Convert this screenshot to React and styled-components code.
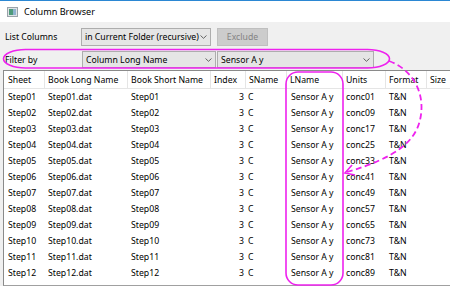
import React from "react";
import styled, { createGlobalStyle } from "styled-components";

const Global = createGlobalStyle`
  html, body { margin: 0; padding: 0; background: #f0f0f0; }
  body { font-family: "Noto Sans", "DejaVu Sans", sans-serif; }
  * { box-sizing: border-box; }
`;

const Window = styled.div`
  position: relative;
  width: 450px;
  height: 286px;
  overflow: hidden;
  background: #f0f0f0;
  display: flex;
  flex-direction: column;
  font-size: 8.7px;
  color: #000;
`;

const TitleBar = styled.div`
  height: 22px;
  flex: none;
  background: #fff;
  border-top: 1px solid #2b87d3;
  display: flex;
  align-items: center;
  padding-left: 7px;
  gap: 6px;
  font-size: 9.1px;
`;

const Body = styled.div`
  flex: 1;
  display: flex;
  flex-direction: column;
  padding-top: 6px;
  min-height: 0;
`;

const FormRow = styled.div`
  display: flex;
  align-items: center;
  height: ${(p) => p.$h}px;
  margin-bottom: ${(p) => p.$mb}px;
`;

const Label = styled.div`
  width: ${(p) => p.$w}px;
  padding-left: 5px;
  flex: none;
`;

const Combo = styled.div`
  width: ${(p) => p.$w}px;
  height: 100%;
  margin-right: ${(p) => p.$mr || 0}px;
  background: #e5e5e5;
  border: 1px solid #adadad;
  display: flex;
  align-items: center;
  justify-content: space-between;
  padding: 0 3px 0 3px;
  flex: none;
  white-space: nowrap;
  overflow: hidden;
`;

const Chevron = () => (
  <svg width="7" height="4" viewBox="0 0 7 4" style={{ flex: "none" }}>
    <path d="M0.5 0.5 L3.5 3.3 L6.5 0.5" fill="none" stroke="#555" strokeWidth="0.9" />
  </svg>
);

const Button = styled.div`
  width: 51px;
  height: 100%;
  background: #cccccc;
  border: 1px solid #bfbfbf;
  color: #838383;
  display: flex;
  align-items: center;
  justify-content: center;
`;

const Table = styled.div`
  flex: 1;
  margin-left: 3px;
  margin-top: 2px;
  background: #fff;
  border-left: 1px solid #8a8a8a;
  border-top: 1px solid #8a8a8a;
  border-bottom: 1px solid #a0a0a0;
  min-height: 0;
`;

const COLS = "41px 83px 83px 35px 41px 56px 43px 41px 60px";

const HeaderRow = styled.div`
  display: grid;
  grid-template-columns: ${COLS};
  height: 18px;
`;

const HeadCell = styled.div`
  border-right: 1px solid #e5e5e5;
  border-bottom: 1px solid #e5e5e5;
  padding-left: ${(p) => p.$pl ?? 3}px;
  display: flex;
  align-items: center;
  white-space: nowrap;
  overflow: hidden;
`;

const DataRow = styled.div`
  display: grid;
  grid-template-columns: ${COLS};
  height: 16px;
`;

const Cell = styled.div`
  display: flex;
  align-items: center;
  justify-content: ${(p) => (p.$right ? "flex-end" : "flex-start")};
  padding-left: ${(p) => (p.$right ? 0 : p.$pl ?? 3)}px;
  padding-right: ${(p) => (p.$right ? 2 : 0)}px;
  white-space: nowrap;
  overflow: hidden;
`;

const Overlay = styled.svg`
  position: absolute;
  left: 0;
  top: 0;
  pointer-events: none;
`;

const AppIcon = () => (
  <svg width="11" height="10" viewBox="0 0 11 10">
    <rect x="0.5" y="0.5" width="10" height="9" fill="#dfe3e6" stroke="#9aa3aa" />
    <rect x="2" y="2" width="4" height="6" fill="#4e9a7a" />
    <rect x="6" y="2" width="3" height="6" fill="#8fb3cf" />
  </svg>
);

const headers = ["Sheet", "Book Long Name", "Book Short Name", "Index", "SName", "LName", "Units", "Format", "Size"];
const units = ["01", "09", "17", "25", "33", "41", "49", "57", "65", "73", "81", "89"];

export default function App() {
  return (
    <>
      <Global />
      <Window>
        <TitleBar>
          <AppIcon />
          <span>Column Browser</span>
        </TitleBar>
        <Body>
          <FormRow $h={18} $mb={5}>
            <Label $w={81}>List Columns</Label>
            <Combo $w={130} $mr={6}>
              <span>in Current Folder (recursive)</span>
              <Chevron />
            </Combo>
            <Button>Exclude</Button>
          </FormRow>
          <FormRow $h={17} $mb={0}>
            <Label $w={82}>Filter by</Label>
            <Combo $w={134} $mr={1}>
              <span>Column Long Name</span>
              <Chevron />
            </Combo>
            <Combo $w={157}>
              <span>Sensor A y</span>
              <Chevron />
            </Combo>
          </FormRow>
          <Table>
            <HeaderRow>
              {headers.map((h, i) => (
                <HeadCell key={h} $pl={i === 0 ? 4 : 3}>{h}</HeadCell>
              ))}
            </HeaderRow>
            {units.map((u, i) => {
              const n = String(i + 1).padStart(2, "0");
              return (
                <DataRow key={n}>
                  <Cell $pl={4}>Step{n}</Cell>
                  <Cell>Step{n}.dat</Cell>
                  <Cell>Step{n}</Cell>
                  <Cell $right>3</Cell>
                  <Cell $pl={2}>C</Cell>
                  <Cell $pl={4}>Sensor A y</Cell>
                  <Cell>conc{u}</Cell>
                  <Cell>T&amp;N</Cell>
                  <Cell />
                </DataRow>
              );
            })}
          </Table>
        </Body>
        <Overlay width="450" height="286" viewBox="0 0 450 286">
          <rect x="3.5" y="49.5" width="386" height="18.5" rx="22" ry="9.2" fill="none" stroke="#ee22ee" strokeWidth="1.6" />
          <rect x="286" y="72" width="57" height="213" rx="12" ry="12" fill="none" stroke="#ee22ee" strokeWidth="1.6" />
          <path d="M389 61 C414 70, 426 95, 420 120 C415 142, 395 158, 347 172" fill="none" stroke="#ee22ee" strokeWidth="1.8" strokeDasharray="6 3.5" />
          <path d="M352 165 L345 173 L355 175" fill="none" stroke="#ee22ee" strokeWidth="1.6" />
        </Overlay>
      </Window>
    </>
  );
}
